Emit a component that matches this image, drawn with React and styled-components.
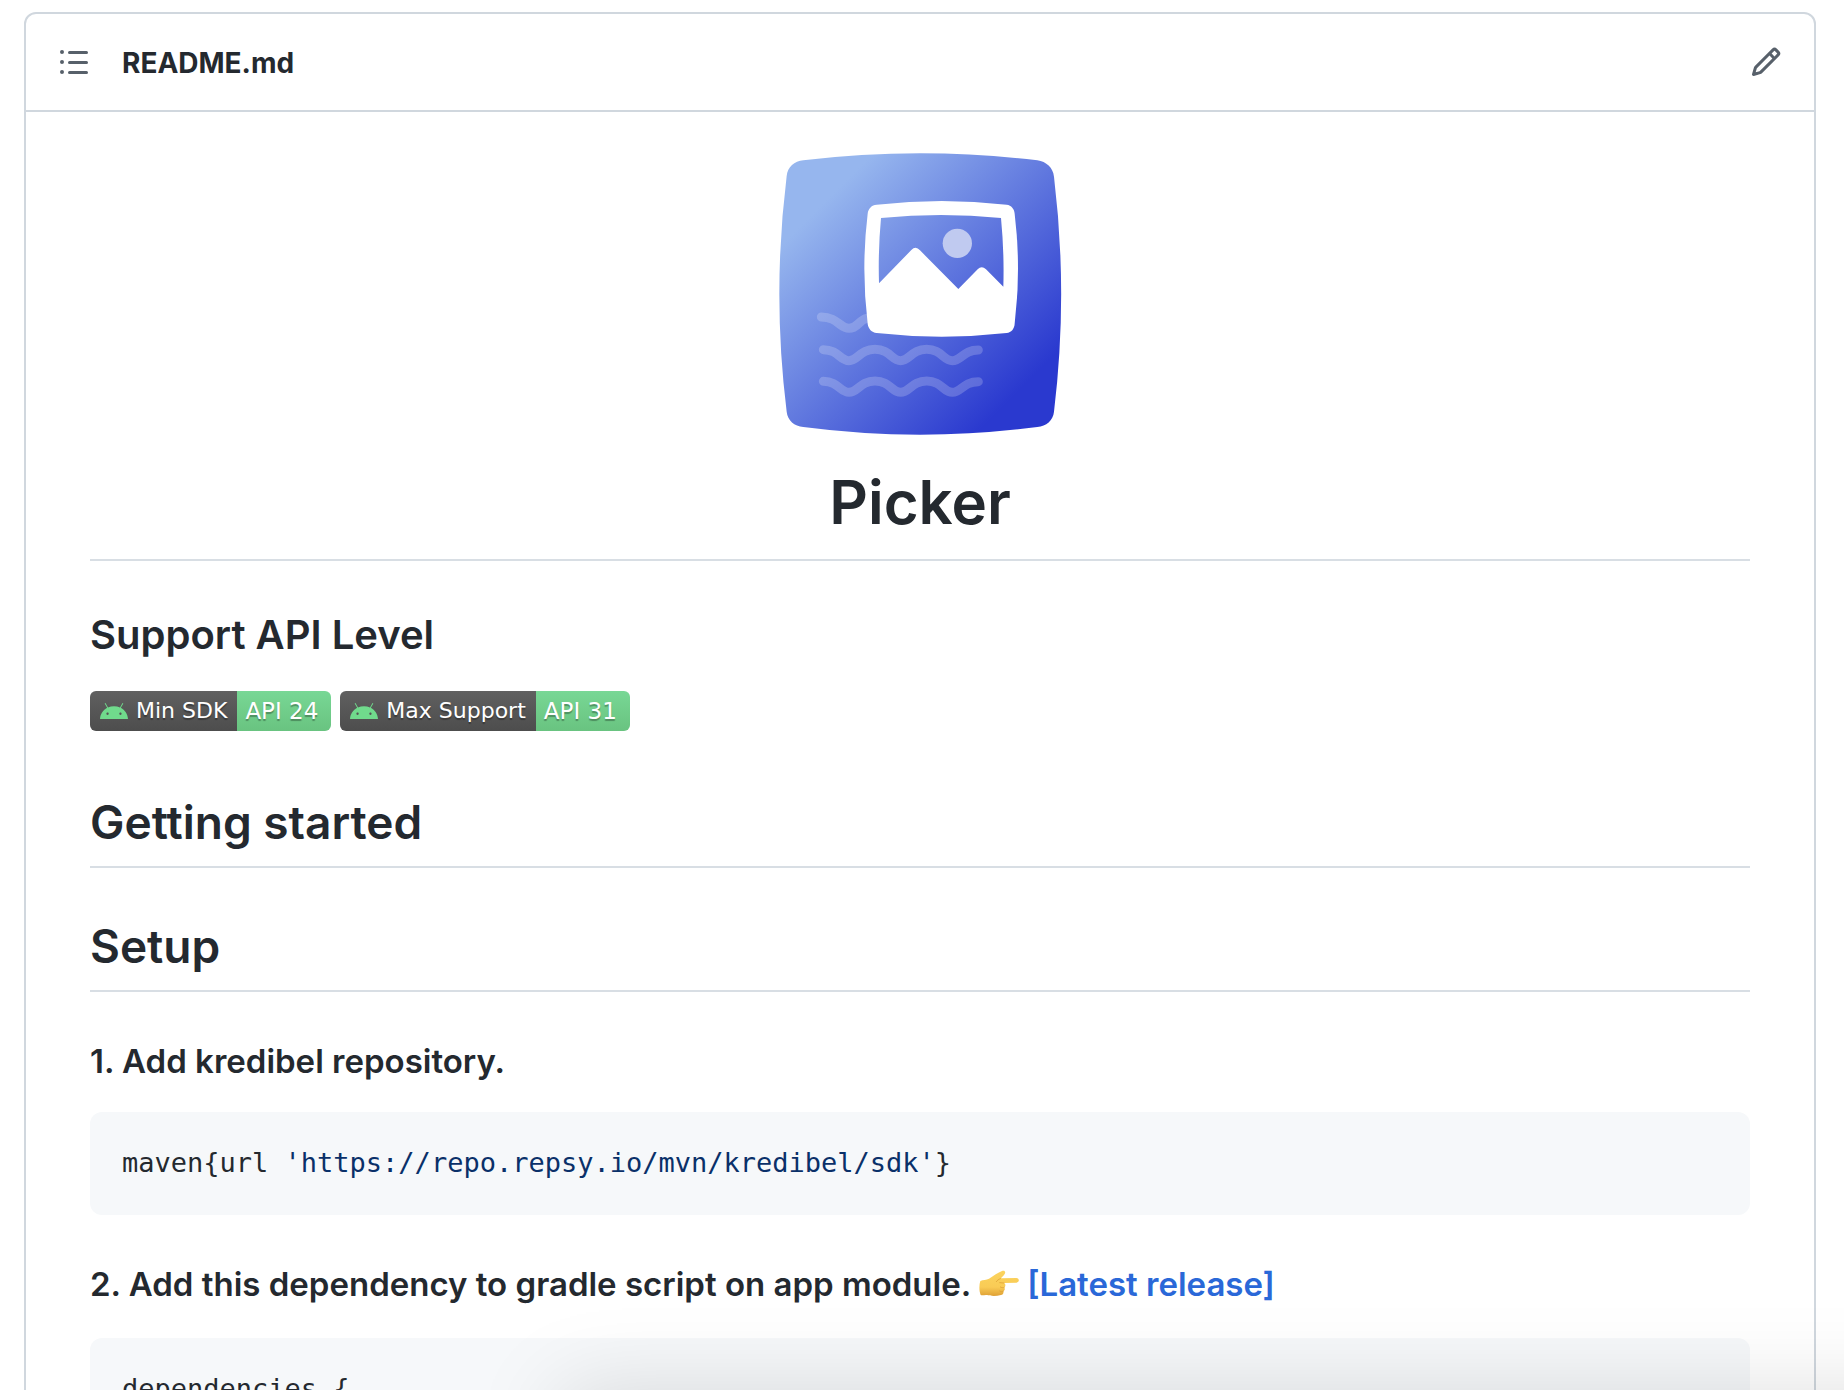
import React from "react";
import styled, { createGlobalStyle } from "styled-components";

const GlobalStyle = createGlobalStyle`
  *, *::before, *::after { box-sizing: border-box; }
  body {
    margin: 0;
    background: #ffffff;
    color: #24292f;
    font-family: Inter, "Liberation Sans", sans-serif;
    -webkit-font-smoothing: antialiased;
  }
`;

const Page = styled.main`
  height: 100vh;
  overflow: hidden;
  padding: 12px 28px 0 24px;
`;

const Panel = styled.section`
  border: 2px solid #d0d7de;
  border-radius: 12px;
`;

const PanelHeader = styled.header`
  display: flex;
  align-items: center;
  gap: 32px;
  height: 98px;
  padding: 0 32px;
  border-bottom: 2px solid #d0d7de;
`;

const IconButton = styled.button`
  display: flex;
  padding: 0;
  border: 0;
  background: none;
  color: #57606a;
  cursor: pointer;

  svg {
    width: 32px;
    height: 32px;
    fill: currentColor;
  }
`;

const FileName = styled.h2`
  flex: 1;
  margin: 0;
  padding-top: 2px;
  font-size: 28px;
  line-height: 40px;
  font-weight: 650;
`;

const Article = styled.article`
  padding: 32px 64px 64px;
`;

const Logo = styled.svg`
  display: block;
  width: 300px;
  height: 300px;
  margin: 0 auto 16px;
`;

const Title = styled.h1`
  margin: 0 0 48px;
  padding-bottom: 15px;
  border-bottom: 2px solid #d8dee4;
  font-size: 60px;
  line-height: 84px;
  font-weight: 600;
  text-align: center;
`;

const SectionTitle = styled.h2`
  margin: 48px 0;
  padding-bottom: 14px;
  border-bottom: 2px solid #d8dee4;
  font-size: 46px;
  line-height: 60px;
  font-weight: 600;
`;

const Subtitle = styled.h3`
  margin: 0 0 30px;
  font-size: 40px;
  line-height: 52px;
  font-weight: 600;
`;

const Step = styled.h4`
  margin: 48px 0 30px;
  font-size: 33px;
  line-height: 42px;
  font-weight: 600;
`;

const Link = styled.a`
  color: #2a68d8;
  text-decoration: none;
`;

const PointingHand = styled.svg`
  width: 40px;
  height: 38px;
  vertical-align: -12px;
`;

const BadgeRow = styled.div`
  display: flex;
  gap: 9px;
  height: 53px;
`;

const BadgeBox = styled.span`
  display: flex;
  height: 40px;
  border-radius: 6px;
  overflow: hidden;
  color: #ffffff;
  font: 22px/40px "DejaVu Sans", Verdana, sans-serif;
  text-shadow: 0 2px 1px rgba(1, 1, 1, 0.3);
`;

const BadgeLabel = styled.span`
  display: flex;
  align-items: center;
  gap: 8px;
  padding: 0 10px;
  background: linear-gradient(#606060, #4d4d4d);

  svg {
    width: 28px;
    height: 28px;
    fill: #70da8c;
  }
`;

const BadgeValue = styled.span`
  padding: 0 13px 0 8px;
  background: linear-gradient(#78d795, #69c380);
  font-size: 23px;
`;

const CodeBlock = styled.pre`
  margin: 0;
  padding: 31px 32px 33px;
  border-radius: 12px;
  background: #f6f8fa;
  font: 27px/39px "DejaVu Sans Mono", "Liberation Mono", monospace;
  overflow: hidden;
`;

const CodeString = styled.span`
  color: #0a3069;
`;

const WindowShadow = styled.div`
  position: fixed;
  top: 100%;
  left: 560px;
  right: -120px;
  height: 400px;
  box-shadow: 0 0 84px rgba(0, 0, 0, 0.13);
  pointer-events: none;
`;

function PickerLogo() {
  const wave = "c45 0 50 33 77 33s33 -34 78 -34 s50 34 77 34 s33 -34 78 -34 s50 34 77 34 s33 -32 78 -32";
  return (
    <Logo viewBox="30 12 900 900" role="img" aria-label="Picker logo">
      <defs>
        <linearGradient id="tile" gradientUnits="userSpaceOnUse" x1="190" y1="190" x2="764" y2="764">
          <stop offset="0" stopColor="#96b6ee" />
          <stop offset="1" stopColor="#2a39cf" />
        </linearGradient>
      </defs>
      <path
        fill="url(#tile)"
        d="M80 108C83 81 103 64 130 61Q480 19 832 61C859 65 879 83 882 110Q925 462 882 815C879 842 859 858 832 861Q480 907 130 861C103 858 83 842 80 815Q36 462 80 108Z"
      />
      <g fill="none" stroke="#fff" strokeOpacity="0.2" strokeWidth="27" strokeLinecap="round">
        <path d="M184 531c48 0 56 34 83 34s28 -24 53 -30" />
        <path d={`M190 629${wave}`} />
        <path d={`M190 724${wave}`} />
      </g>
      <path
        fill="#fff"
        fillRule="evenodd"
        d="M323 221C325 205 335 195 350 194Q545 172 740 194C754 196 763 206 764 221Q784 386 764 551C763 567 754 577 740 579Q545 601 350 579C335 577 325 567 323 551Q303 386 323 221ZM363 234Q543 216 723 234Q733 337 730 440L678 388Q665 376 653 388L595 447L480 331Q467 316 454 330L357 430Q354 332 363 234Z"
      />
      <circle cx="592" cy="310" r="44" fill="#c0caf0" />
    </Logo>
  );
}

function AndroidIcon() {
  return (
    <svg viewBox="0 0 24 24" aria-hidden="true">
      <path d="M17.523 15.3414c-.5511 0-.9993-.4486-.9993-.9997s.4483-.9993.9993-.9993c.5511 0 .9993.4483.9993.9993.0001.5511-.4482.9997-.9993.9997m-11.046 0c-.5511 0-.9993-.4486-.9993-.9997s.4482-.9993.9993-.9993c.5511 0 .9993.4483.9993.9993 0 .5511-.4483.9997-.9993.9997m11.4045-6.02l1.9973-3.4592a.416.416 0 00-.1521-.5676.416.416 0 00-.5676.1521l-2.0223 3.503C15.5902 8.2439 13.8533 7.8508 12 7.8508s-3.5902.3931-5.1367 1.0989L4.841 5.4467a.4161.4161 0 00-.5677-.1521.4157.4157 0 00-.1521.5676l1.9973 3.4592C2.6889 11.1867.3432 14.6589 0 18.761h24c-.3435-4.1021-2.6892-7.5743-6.1185-9.4396" />
    </svg>
  );
}

function Badge({ label, value }) {
  return (
    <BadgeBox>
      <BadgeLabel>
        <AndroidIcon />
        {label}
      </BadgeLabel>
      <BadgeValue>{value}</BadgeValue>
    </BadgeBox>
  );
}

function HandIcon() {
  return (
    <PointingHand viewBox="0 5 120 114" role="img" aria-label="pointing right">
      <defs>
        <linearGradient id="skin" x1="0" y1="0" x2="0" y2="1">
          <stop offset="0" stopColor="#fbd35f" />
          <stop offset="0.65" stopColor="#f9cb55" />
          <stop offset="1" stopColor="#dfa136" />
        </linearGradient>
      </defs>
      <path
        fill="url(#skin)"
        d="M4 38C12 34 22 35 30 31C44 22 57 13 69 8C77 5 81 11 77 17C74 23 69 25 66 30L112 29C122 30 122 41 112 43L75 44C81 48 80 54 76 57C79 63 77 67 73 69C75 75 71 80 66 80C50 84 34 83 24 80C17 79 10 82 5 80C0 67 0 50 4 38Z"
      />
      <path
        fill="none"
        stroke="#d99a30"
        strokeWidth="2"
        strokeLinecap="round"
        d="M64 31C58 33 55 36 52 40M75 44L62 43M76 57C72 59 67 58 64 56M73 69C69 71 65 70 62 68"
      />
    </PointingHand>
  );
}

export default function App() {
  return (
    <>
      <GlobalStyle />
      <Page>
        <Panel>
          <PanelHeader>
            <IconButton type="button" aria-label="Table of contents">
              <svg viewBox="0 0 16 16" aria-hidden="true">
                <path d="M5.75 2.5h8.5a.75.75 0 0 1 0 1.5h-8.5a.75.75 0 0 1 0-1.5Zm0 5h8.5a.75.75 0 0 1 0 1.5h-8.5a.75.75 0 0 1 0-1.5Zm0 5h8.5a.75.75 0 0 1 0 1.5h-8.5a.75.75 0 0 1 0-1.5ZM2 14a1 1 0 1 1 0-2 1 1 0 0 1 0 2Zm1-6a1 1 0 1 1-2 0 1 1 0 0 1 2 0ZM2 4a1 1 0 1 1 0-2 1 1 0 0 1 0 2Z" />
              </svg>
            </IconButton>
            <FileName>README.md</FileName>
            <IconButton type="button" aria-label="Edit file">
              <svg viewBox="0 0 16 16" aria-hidden="true">
                <path
                  fillRule="evenodd"
                  d="M11.013 1.427a1.75 1.75 0 012.474 0l1.086 1.086a1.75 1.75 0 010 2.474l-8.61 8.61c-.21.21-.47.364-.756.445l-3.251.93a.75.75 0 01-.927-.928l.929-3.25a1.75 1.75 0 01.445-.758l8.61-8.61zm1.414 1.06a.25.25 0 00-.354 0L10.811 3.75l1.439 1.44 1.263-1.263a.25.25 0 000-.354l-1.086-1.086zM11.189 6.25L9.75 4.81l-6.286 6.287a.25.25 0 00-.064.108l-.558 1.953 1.953-.558a.249.249 0 00.108-.064l6.286-6.286z"
                />
              </svg>
            </IconButton>
          </PanelHeader>
          <Article>
            <PickerLogo />
            <Title>Picker</Title>
            <Subtitle>Support API Level</Subtitle>
            <BadgeRow>
              <Badge label="Min SDK" value="API 24" />
              <Badge label="Max Support" value="API 31" />
            </BadgeRow>
            <SectionTitle>Getting started</SectionTitle>
            <SectionTitle>Setup</SectionTitle>
            <Step>1. Add kredibel repository.</Step>
            <CodeBlock>
              <code>
                maven{"{"}url <CodeString>'https://repo.repsy.io/mvn/kredibel/sdk'</CodeString>
                {"}"}
              </code>
            </CodeBlock>
            <Step>
              2. Add this dependency to gradle script on app module. <HandIcon />{" "}
              <Link href="#latest-release">[Latest release]</Link>
            </Step>
            <CodeBlock>
              <code>dependencies {"{"}</code>
            </CodeBlock>
          </Article>
        </Panel>
      </Page>
      <WindowShadow />
    </>
  );
}
